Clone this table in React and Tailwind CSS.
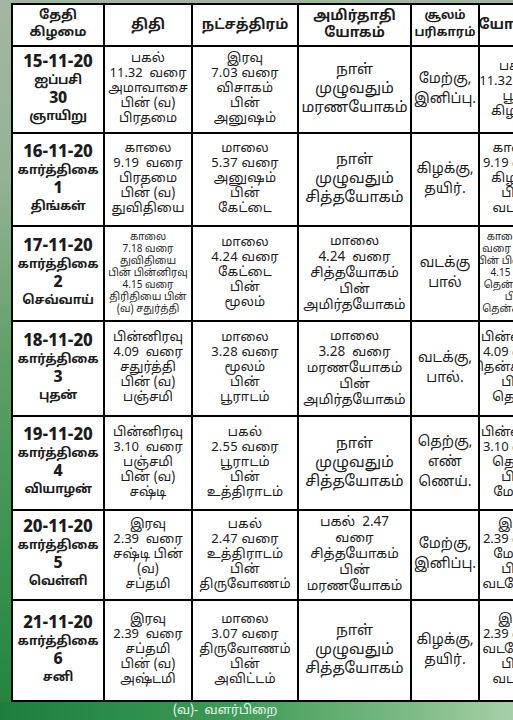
import React from "react";

const rows = [
  {
    date: ["15-11-20", "ஐப்பசி", "30", "ஞாயிறு"],
    thithi: ["பகல்", "11.32  வரை", "அமாவாசை", "பின் (வ)", "பிரதமை"],
    star: ["இரவு", "7.03 வரை", "விசாகம்", "பின்", "அனுஷம்"],
    yogam: ["நாள்", "முழுவதும்", "மரணயோகம்"],
    soolam: ["மேற்கு,", "இனிப்பு."],
    yogini: ["பகல்", "11.32 வரை", "பூமி", "கிழக்கு"],
  },
  {
    date: ["16-11-20", "கார்த்திகை", "1", "திங்கள்"],
    thithi: ["காலை", "9.19  வரை", "பிரதமை", "பின் (வ)", "துவிதியை"],
    star: ["மாலை", "5.37 வரை", "அனுஷம்", "பின்", "கேட்டை"],
    yogam: ["நாள்", "முழுவதும்", "சித்தயோகம்"],
    soolam: ["கிழக்கு,", "தயிர்."],
    yogini: ["காலை", "9.19 வரை", "கிழக்கு", "பின்", "வடக்கு"],
  },
  {
    date: ["17-11-20", "கார்த்திகை", "2", "செவ்வாய்"],
    thithi: ["காலை", "7.18 வரை", "துவிதியை", "பின் பின்னிரவு", "4.15 வரை", "திரிதியை பின்", "(வ) சதுர்த்தி"],
    small: true,
    star: ["மாலை", "4.24 வரை", "கேட்டை", "பின்", "மூலம்"],
    yogam: ["மாலை", "4.24  வரை", "சித்தயோகம்", "பின்", "அமிர்தயோகம்"],
    soolam: ["வடக்கு", "பால்"],
    yogini: ["காலை 7.18", "வரை வடக்கு", "பின் பின்னிரவு", "4.15 வரை", "தென்மேற்கு", "பின்", "தென்கிழக்கு"],
    yoginiSmall: true,
  },
  {
    date: ["18-11-20", "கார்த்திகை", "3", "புதன்"],
    thithi: ["பின்னிரவு", "4.09  வரை", "சதுர்த்தி", "பின் (வ)", "பஞ்சமி"],
    star: ["மாலை", "3.28 வரை", "மூலம்", "பின்", "பூராடம்"],
    yogam: ["மாலை", "3.28  வரை", "மரணயோகம்", "பின்", "அமிர்தயோகம்"],
    soolam: ["வடக்கு,", "பால்."],
    yogini: ["பின்னிரவு", "4.09 வரை", "தென்கிழக்கு", "பின்", "தெற்கு"],
  },
  {
    date: ["19-11-20", "கார்த்திகை", "4", "வியாழன்"],
    thithi: ["பின்னிரவு", "3.10  வரை", "பஞ்சமி", "பின் (வ)", "சஷ்டி"],
    star: ["பகல்", "2.55 வரை", "பூராடம்", "பின்", "உத்திராடம்"],
    yogam: ["நாள்", "முழுவதும்", "சித்தயோகம்"],
    soolam: ["தெற்கு,", "எண்", "ணெய்."],
    yogini: ["பின்னிரவு", "3.10 வரை", "தெற்கு", "பின்", "மேற்கு"],
  },
  {
    date: ["20-11-20", "கார்த்திகை", "5", "வெள்ளி"],
    thithi: ["இரவு", "2.39  வரை", "சஷ்டி பின்", "(வ)", "சப்தமி"],
    star: ["பகல்", "2.47 வரை", "உத்திராடம்", "பின்", "திருவோணம்"],
    yogam: ["பகல்  2.47", "வரை", "சித்தயோகம்", "பின்", "மரணயோகம்"],
    soolam: ["மேற்கு,", "இனிப்பு."],
    yogini: ["இரவு", "2.39 வரை", "மேற்கு", "பின்", "வடமேற்கு"],
  },
  {
    date: ["21-11-20", "கார்த்திகை", "6", "சனி"],
    thithi: ["இரவு", "2.39  வரை", "சப்தமி", "பின் (வ)", "அஷ்டமி"],
    star: ["மாலை", "3.07 வரை", "திருவோணம்", "பின்", "அவிட்டம்"],
    yogam: ["நாள்", "முழுவதும்", "சித்தயோகம்"],
    soolam: ["கிழக்கு,", "தயிர்."],
    yogini: ["இரவு", "2.39 வரை", "வடமேற்கு", "பின்", "வடக்கு"],
  },
];

const rowHeights = ["h-[85px]", "h-[91px]", "h-[93px]", "h-[93px]", "h-[92px]", "h-[88px]", "h-[99px]"];

const Cell = ({ lines, className }) => (
  <div className={"bg-white flex flex-col items-center justify-center text-center text-[#1c1c1c] overflow-hidden " + className}>
    {lines.map((l, i) => (
      <span key={i} className="whitespace-pre">
        {l}
      </span>
    ))}
  </div>
);

const App = () => {
  return (
    <div className="w-[513px] h-[720px] overflow-hidden relative bg-[linear-gradient(180deg,#a3b6a2_0%,#94b294_25%,#5f9f68_50%,#3c9352_75%,#22833f_100%)] font-['Noto_Sans_Tamil','Lohit_Tamil','Noto_Sans','Liberation_Sans',sans-serif]">
      <div className="pt-[3px] pl-[11px]">
        <div className="w-[543px] bg-black p-[2px] grid grid-cols-[90px_86px_104px_111px_66px_72px] gap-[2px]">
          <Cell lines={["தேதி", "கிழமை"]} className="h-[40px] text-[13px] font-bold leading-[17px]" />
          <Cell lines={["திதி"]} className="h-[40px] text-[14px] font-bold" />
          <Cell lines={["நட்சத்திரம்"]} className="h-[40px] text-[14px] font-bold" />
          <Cell lines={["அமிர்தாதி", "யோகம்"]} className="h-[40px] text-[14px] font-bold leading-[17px]" />
          <Cell lines={["சூலம்", "பரிகாரம்"]} className="h-[40px] text-[12px] font-bold leading-[17px]" />
          <Cell lines={["யோகினி"]} className="h-[40px] text-[14px] font-bold" />
          {rows.map((r, i) => (
            <React.Fragment key={i}>
              <Cell
                lines={r.date}
                className={rowHeights[i] + " text-[12.5px] font-bold leading-[18px] tracking-[-0.3px] [&>span:first-child]:text-[17px] [&>span:first-child]:font-extrabold [&>span:first-child]:tracking-normal [&>span:nth-child(3)]:text-[16px] [&>span:nth-child(3)]:font-extrabold"}
              />
              <Cell
                lines={r.thithi}
                className={rowHeights[i] + (r.small ? " text-[10px] leading-[12px]" : " text-[13px] leading-[15px]")}
              />
              <Cell lines={r.star} className={rowHeights[i] + " text-[13px] leading-[15px] tracking-[0.2px]"} />
              <Cell
                lines={r.yogam}
                className={rowHeights[i] + (r.yogam.length > 3 ? " text-[13.5px] leading-[16px]" : " text-[15px] leading-[19px]")}
              />
              <Cell lines={r.soolam} className={rowHeights[i] + " text-[14px] leading-[20px]"} />
              <Cell
                lines={r.yogini}
                className={rowHeights[i] + (r.yoginiSmall ? " text-[10px] leading-[12px]" : " text-[13px] leading-[15px]")}
              />
            </React.Fragment>
          ))}
        </div>
      </div>
      <div className="absolute left-0 right-0 bottom-0 h-[18px] bg-[linear-gradient(90deg,#1d7e3d_0%,#3d9a55_45%,#7dbb84_80%,#a7d0a8_100%)] flex items-center pl-[173px]">
        <span className="text-[12.5px] leading-none text-[#eef6ee] whitespace-pre">(வ)-  வளர்பிறை</span>
      </div>
    </div>
  );
};

export default App;
